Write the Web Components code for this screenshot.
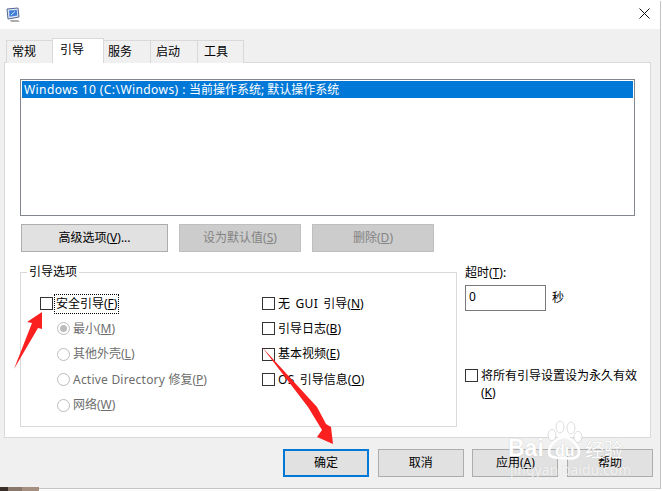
<!DOCTYPE html>
<html lang="zh">
<head>
<meta charset="utf-8">
<title>系统配置</title>
<style>
html, body { margin: 0; height: 100%; background: #fdfdfd; }
body { font: 12px/16px "Noto Sans", "Noto Sans CJK SC", sans-serif; color: #000; overflow: hidden; }
.lat { letter-spacing: .42px; }
.lat.tight { letter-spacing: .22px; }
.lat.wide { word-spacing: 1.5px; }
</style>
</head>
<body>
<template id="dialog-tpl">
	<style>
	:host { display: flex; flex-direction: column; position: relative; width: 660px; height: 488px; background: #f0f0f0; box-shadow: 1px 1px 0 #c4c4c4; }
	.title { height: 29px; flex: none; background: #fff; display: flex; align-items: center; justify-content: space-between; padding: 0 10px 0 6px; box-sizing: border-box; }
	.title svg { display: block; }
	.close { margin-top: -3px; }
	.main { padding: 10px 9px 0 4px; flex: none; }
	.foot { display: flex; justify-content: flex-end; gap: 8.67px; padding: 11px 7px 0 0; }
	</style>
	<div class="title">
		<svg width="15" height="16" viewBox="0 0 15 16"><path d="M1 2 12 1l1 9-11 2z" fill="#dfe6f5" stroke="#52668f"/><path d="M3 3.5 10.800 3l.5 5.500-7.800 1.300z" fill="#3f7fd6"/><path d="M5 8 9 4.500" stroke="#d5e8ff"/><path d="M4 13h8l2 2H5z" fill="#aeaeae"/></svg>
		<svg class="close" width="11" height="11" viewBox="0 0 11 11"><path d="M.5.5 10.500 10.500M10.500.5.5 10.500" stroke="#111" fill="none"/></svg>
	</div>
	<div class="main"><slot></slot></div>
	<div class="foot"><slot name="foot"></slot></div>
	<slot name="over"></slot>
</template>

<template id="tabs-tpl">
	<style>
	:host { display: block; }
	.strip { display: flex; align-items: flex-end; height: 24px; padding-left: 3px; position: relative; z-index: 1; margin-bottom: -1px; }
	.panel { background: #fff; border: 1px solid #d9d9d9; box-sizing: border-box; height: 376px; padding: 16px 15px 0; }
	</style>
	<div class="strip"><slot name="tab"></slot></div>
	<div class="panel"><slot></slot></div>
</template>

<template id="tab-tpl">
	<style>
	:host { display: block; box-sizing: border-box; height: 23px; line-height: 22px; background: #f0f0f0; border: 1px solid #d9d9d9; border-bottom: 0; margin-left: -1px; }
	:host([active]) { height: 25px; background: #fff; line-height: 22px; position: relative; z-index: 1; }
	</style>
	<slot></slot>
</template>

<template id="listbox-tpl">
	<style>
	:host { display: block; box-sizing: border-box; height: 137px; border: 1px solid #82878f; padding: 1px; background: #fff; }
	</style>
	<slot></slot>
</template>

<template id="list-item-tpl">
	<style>
	:host { display: block; height: 17px; line-height: 17px; padding-left: 2px; background: #0078d7; color: #fff; white-space: nowrap; }
	</style>
	<slot></slot>
</template>

<template id="button-tpl">
	<style>
	:host { display: flex; align-items: center; justify-content: center; box-sizing: border-box; height: 28px; background: #e1e1e1; border: 1px solid #adadad; white-space: nowrap; flex: none; }
	:host([disabled]) { background: #cccccc; border-color: #bfbfbf; color: #838383; }
	:host([default]) { border: 2px solid #0078d7; }
	</style>
	<slot></slot>
</template>

<template id="group-tpl">
	<style>
	:host { display: block; flex: none; width: 437px; }
	fieldset { margin: 0; box-sizing: border-box; height: 163px; padding: 11px 0 0 19px; border: 1px solid #d9d9d9; display: grid; grid-template-columns: 222px 1fr; grid-template-rows: repeat(5, 25.4px); }
	legend { padding: 0 2px; margin-left: -13px; }
	</style>
	<fieldset><legend><slot name="legend"></slot></legend><slot></slot></fieldset>
</template>

<template id="option-tpl">
	<style>
	:host { display: flex; align-items: center; gap: 2px; height: 25px; white-space: nowrap; }
	:host([indent]) { padding-left: 17px; }
	:host([disabled]) { color: #6d6d6d; }
	.box { flex: none; width: 11px; height: 11px; border: 1px solid #333; background: #fff; }
	:host([radio]) .box { border-radius: 50%; border-color: #bcbcbc; display: flex; align-items: center; justify-content: center; }
	:host([radio][checked]) .box::after { content: ""; width: 7px; height: 7px; border-radius: 50%; background: #bcbcbc; }
	.label { padding: 0 1px; }
	:host([focus]) .label { display: inline-block; line-height: 18px; outline: 1px dotted #000; }
	:host([wrap]) { align-items: flex-start; height: auto; line-height: 17px; }
	:host([wrap]) .box { margin-top: 2px; }
	</style>
	<span class="box"></span><span class="label"><slot></slot></span>
</template>

<template id="timeout-tpl">
	<style>
	:host { display: flex; flex-direction: column; width: 178px; flex: none; padding-top: 1px; }
	.field { display: flex; align-items: center; gap: 6px; margin-top: 4px; }
	.input { box-sizing: border-box; width: 81px; height: 26px; border: 1px solid #7a7a7a; background: #fff; padding: 3px 3px; line-height: 16px; }
	.opt { margin-top: 56px; }
	</style>
	<div><slot name="label"></slot></div>
	<div class="field"><div class="input"><slot name="value"></slot></div><slot name="unit"></slot></div>
	<div class="opt"><slot></slot></div>
</template>

<template id="watermark-tpl">
	<style>
	:host { position: absolute; left: 500px; top: 415px; width: 130px; height: 68px; color: #fff; pointer-events: none; }
	svg { position: absolute; left: 0; top: 0; }
	span { position: absolute; white-space: nowrap; text-shadow: 0 0 1px #b5b5b5; }
	.bai { left: 8px; top: 21px; font: bold 23px/24px "Liberation Sans", sans-serif; }
	.du { left: 55px; top: 27px; font: bold 16px/18px "Liberation Sans", sans-serif; }
	.cn { left: 85px; top: 23px; font: 19px/22px "Noto Sans CJK SC", sans-serif; }
	.url { left: 10px; top: 47px; font: 14px/16px "Noto Sans", sans-serif; opacity: .6; }
	</style>
	<svg width="90" height="50" viewBox="0 0 90 50" fill="#fff" stroke="#c6c6c6" stroke-width=".6"><ellipse cx="52" cy="20" rx="4" ry="5.500"/><ellipse cx="60" cy="12" rx="4" ry="6"/><ellipse cx="71" cy="13" rx="4" ry="6"/><ellipse cx="78" cy="22" rx="4" ry="5.500"/><path d="M64 22c6 0 15 8 15 15s-8 7-15 6-15 1-15-6 9-15 15-15z" fill="none" stroke="#fff" stroke-width="2.500"/></svg>
	<span class="bai">Bai</span><span class="du">du</span><span class="cn">经验</span><span class="url">jingyan.baidu.com</span>
</template>

<template id="arrows-tpl">
	<style>
	:host { position: absolute; left: 0; top: 0; pointer-events: none; }
	svg { display: block; }
	</style>
	<svg width="660" height="488" viewBox="0 0 660 488" fill="#fb2020">
		<polygon points="42,312 27,322 32,323 14,369 38,328 42,329"/>
		<polygon points="262,347 317,407 326,424 331,427 333,444 317,437 322,430 308,407"/>
	</svg>
</template>

<template id="desktop-tpl">
	<style>
	:host { display: block; width: 39px; height: 4px; margin-top: -1px; position: relative; background: linear-gradient(90deg, #3a2e28 0 8px, #8a776b 8px 22px, #a58f80 22px); }
	</style>
</template>

<x-dialog>
	<x-tabs>
		<x-tab slot="tab" style="width:47px;padding-left:5px">常规</x-tab>
		<x-tab slot="tab" active style="width:52px;padding-left:7px">引导</x-tab>
		<x-tab slot="tab" style="width:48px;padding-left:4px">服务</x-tab>
		<x-tab slot="tab" style="width:48px;padding-left:5px">启动</x-tab>
		<x-tab slot="tab" style="width:47px;padding-left:6px">工具</x-tab>

		<x-listbox><x-list-item><span class="lat">Windows 10 (C:\Windows) :</span> 当前操作系统; 默认操作系统</x-list-item></x-listbox>

		<div style="display:flex;gap:11px;margin:8px 0 12px 1px">
			<x-button style="width:147px">高级选项(<u>V</u>)...</x-button>
			<x-button disabled style="width:122px">设为默认值(<u>S</u>)</x-button>
			<x-button disabled style="width:122px">删除(<u>D</u>)</x-button>
		</div>

		<div style="display:flex;gap:8px;height:163px">
			<x-group>
				<span slot="legend">引导选项</span>
				<x-option focus>安全引导(<u>F</u>)</x-option>
				<x-option><span class="lat wide">无 GUI </span>引导(<u>N</u>)</x-option>
				<x-option radio checked disabled indent>最小(<u>M</u>)</x-option>
				<x-option>引导日志(<u>B</u>)</x-option>
				<x-option radio disabled indent>其他外壳(<u>L</u>)</x-option>
				<x-option>基本视频(<u>E</u>)</x-option>
				<x-option radio disabled indent><span class="lat tight">Active Directory </span>修复(<u>P</u>)</x-option>
				<x-option><span class="lat wide">OS </span>引导信息(<u>O</u>)</x-option>
				<x-option radio disabled indent>网络(<u>W</u>)</x-option>
			</x-group>
			<x-timeout>
				<span slot="label">超时(<u>T</u>):</span>
				<span slot="value">0</span>
				<span slot="unit">秒</span>
				<x-option wrap>将所有引导设置设为永久有效<br>(<u>K</u>)</x-option>
			</x-timeout>
		</div>
	</x-tabs>

	<x-button slot="foot" default style="width:86px">确定</x-button>
	<x-button slot="foot" style="width:86px">取消</x-button>
	<x-button slot="foot" style="width:86px">应用(<u>A</u>)</x-button>
	<x-button slot="foot" style="width:86px">帮助</x-button>

	<x-watermark slot="over"></x-watermark>
	<x-arrows slot="over"></x-arrows>
</x-dialog>
<x-desktop></x-desktop>

<script>
function define (name, tplId) {
	customElements.define(name, class extends HTMLElement {
		constructor () {
			super();
			this.attachShadow({ mode: 'open' });
			this.shadowRoot.appendChild(document.getElementById(tplId).content.cloneNode(true));
		}
	});
}

define('x-dialog', 'dialog-tpl');
define('x-tabs', 'tabs-tpl');
define('x-tab', 'tab-tpl');
define('x-listbox', 'listbox-tpl');
define('x-list-item', 'list-item-tpl');
define('x-button', 'button-tpl');
define('x-group', 'group-tpl');
define('x-option', 'option-tpl');
define('x-timeout', 'timeout-tpl');
define('x-watermark', 'watermark-tpl');
define('x-arrows', 'arrows-tpl');
define('x-desktop', 'desktop-tpl');
</script>
</body>
</html>
